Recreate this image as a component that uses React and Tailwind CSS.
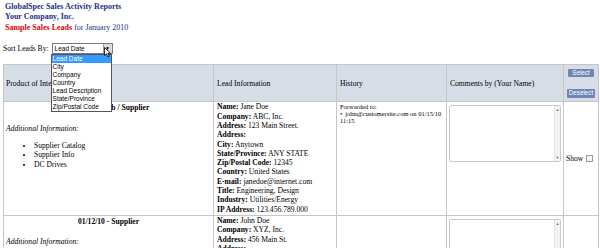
import React from "react";

const sortOptions = [
  "Lead Date",
  "City",
  "Company",
  "Country",
  "Lead Description",
  "State/Province",
  "Zip/Postal Code",
];

const leads = [
  {
    when: "01/12/10 - Web / Supplier",
    products: ["Supplier Catalog", "Supplier Info", "DC Drives"],
    info: [
      ["Name:", "Jane Doe"],
      ["Company:", "ABC, Inc."],
      ["Address:", "123 Main Street."],
      ["Address:", ""],
      ["City:", "Anytown"],
      ["State/Province:", "ANY STATE"],
      ["Zip/Postal Code:", "12345"],
      ["Country:", "United States"],
      ["E-mail:", "janedoe@internet.com"],
      ["Title:", "Engineering, Design"],
      ["Industry:", "Utilities/Energy"],
      ["IP Address:", "123.456.789.000"],
    ],
    history: true,
  },
  {
    when: "01/12/10 - Supplier",
    products: ["Supplier Catalog"],
    info: [
      ["Name:", "John Doe"],
      ["Company:", "XYZ, Inc."],
      ["Address:", "456 Main St."],
      ["Address:", ""],
      ["City:", "Sometown"],
      ["State/Province:", "ANY STATE"],
      ["Zip/Postal Code:", "54321"],
      ["Country:", "United States"],
      ["E-mail:", "johndoe@internet.com"],
      ["Title:", "Purchasing"],
      ["Industry:", "Manufacturing"],
      ["IP Address:", "123.456.789.001"],
    ],
    history: false,
  },
];

const CommentBox = () => (
  <div className="flex h-[57px] w-[112px] border border-[#c9c9c9] rounded-[2px] bg-white">
    <div className="flex-1" />
    <div className="flex w-[6px] flex-col justify-between border-l border-[#e2e2e2] bg-[#f3f3f3] py-[1px] text-[4px] leading-[5px] text-[#777] text-center">
      <span>▲</span>
      <span>▼</span>
    </div>
  </div>
);

export default function App() {
  return (
    <div className="relative h-[248px] w-[600px] overflow-hidden bg-white font-['Liberation_Serif',serif] text-black">
      {/* Heading */}
      <div className="px-[5px] pt-[2px] text-[8px] leading-[9.5px] font-bold text-[#1c2f8c]">
        <div>GlobalSpec Sales Activity Reports</div>
        <div>Your Company, Inc.</div>
      </div>
      <div className="mt-[2px] px-[5px] text-[8px] leading-[10px] text-[#1c2f8c]">
        <span className="font-bold text-[#e60000]">Sample Sales Leads</span> for January 2010
      </div>

      {/* Sort */}
      <div className="mt-[10px] flex items-center px-[3px] text-[7.6px]">
        <span>Sort Leads By:</span>
        <div className="relative ml-[3px]">
          <div className="flex h-[11px] w-[61px] items-center border border-[#7a7a7a] bg-white font-['Liberation_Sans',sans-serif] text-[6.5px]">
            <span className="flex-1 pl-[2px]">Lead Date</span>
            <span className="flex h-full w-[9px] items-center justify-center border-l border-[#9a9a9a] bg-[#dcdcdc] text-[5px]">▼</span>
          </div>
          <div className="absolute left-[-1px] top-[11px] z-10 w-[61px] border border-[#555] bg-white font-['Liberation_Sans',sans-serif] text-[6.5px] leading-[7.9px]">
            {sortOptions.map((o, i) => (
              <div key={o} className={i === 0 ? "bg-[#3399ff] pl-[1px] text-white" : "pl-[1px]"}>
                {o}
              </div>
            ))}
          </div>
          <svg className="absolute left-[52px] top-[4px] z-20" width="8" height="11" viewBox="0 0 8 11">
            <path d="M0.5 0.5 L0.5 8.5 L2.5 6.8 L4 10 L5.3 9.4 L3.9 6.3 L6.6 6.3 Z" fill="#fff" stroke="#000" strokeWidth="0.8" />
          </svg>
        </div>
      </div>

      {/* Table */}
      <table className="ml-[3px] mt-[10px] w-[595px] table-fixed border-collapse border border-[#c6c6c6] text-[7.6px] leading-[9.3px]">
        <colgroup>
          <col className="w-[210px]" />
          <col className="w-[123px]" />
          <col className="w-[110px]" />
          <col className="w-[117px]" />
          <col className="w-[35px]" />
        </colgroup>
        <thead>
          <tr className="h-[37px] bg-[#d6dde7] text-left">
            <th className="border border-[#c6c6c6] px-[2px] font-normal">Product of Interest</th>
            <th className="border border-[#c6c6c6] px-[3px] font-normal">Lead Information</th>
            <th className="border border-[#c6c6c6] px-[3px] font-normal">History</th>
            <th className="border border-[#c6c6c6] px-[3px] font-normal">Comments by (Your Name)</th>
            <th className="border border-[#c6c6c6] px-[1px] font-normal">
              <div className="flex flex-col items-center gap-[12px] font-['Liberation_Sans',sans-serif] text-[6.3px] leading-[8.5px] text-white">
                <span className="rounded-[1px] bg-[#6d86b3] px-[4px]">Select</span>
                <span className="rounded-[1px] bg-[#6d86b3] px-[2px]">Deselect</span>
              </div>
            </th>
          </tr>
        </thead>
        <tbody>
          {leads.map((lead, idx) => (
            <tr key={idx}>
              <td className="border border-[#c6c6c6] px-[2px] pt-[1px] align-top">
                <div className="text-center font-bold">{lead.when}</div>
                <div className="mt-[11px] italic">Additional Information:</div>
                <ul className="mt-[8px] list-disc pl-[28px]">
                  {lead.products.map((p) => (
                    <li key={p}>{p}</li>
                  ))}
                </ul>
              </td>
              <td className="border border-[#c6c6c6] px-[3px] pb-[1px] pt-0 align-top">
                {lead.info.map(([k, v], i) => (
                  <div key={i} className="whitespace-nowrap">
                    <b>{k}</b> {v}
                  </div>
                ))}
              </td>
              <td className="border border-[#c6c6c6] px-[3px] pt-[1px] align-top text-[6.5px] leading-[7px]">
                {lead.history && (
                  <>
                    <div>Forwarded to:</div>
                    <div className="flex">
                      <span className="mr-[3px]">•</span>
                      <span className="whitespace-nowrap">john@customersite.com on 01/15/10</span>
                    </div>
                    <div>11:15</div>
                  </>
                )}
              </td>
              <td className="border border-[#c6c6c6] px-[2px] pt-[3px] align-top">
                <CommentBox />
              </td>
              <td className="border border-[#c6c6c6] px-[2px] align-middle">
                <div className="flex items-center gap-[3px]">
                  <span>Show</span>
                  <span className="h-[7px] w-[7px] border border-[#9a9a9a] bg-[#f4f4f4]" />
                </div>
              </td>
            </tr>
          ))}
        </tbody>
      </table>
    </div>
  );
}
